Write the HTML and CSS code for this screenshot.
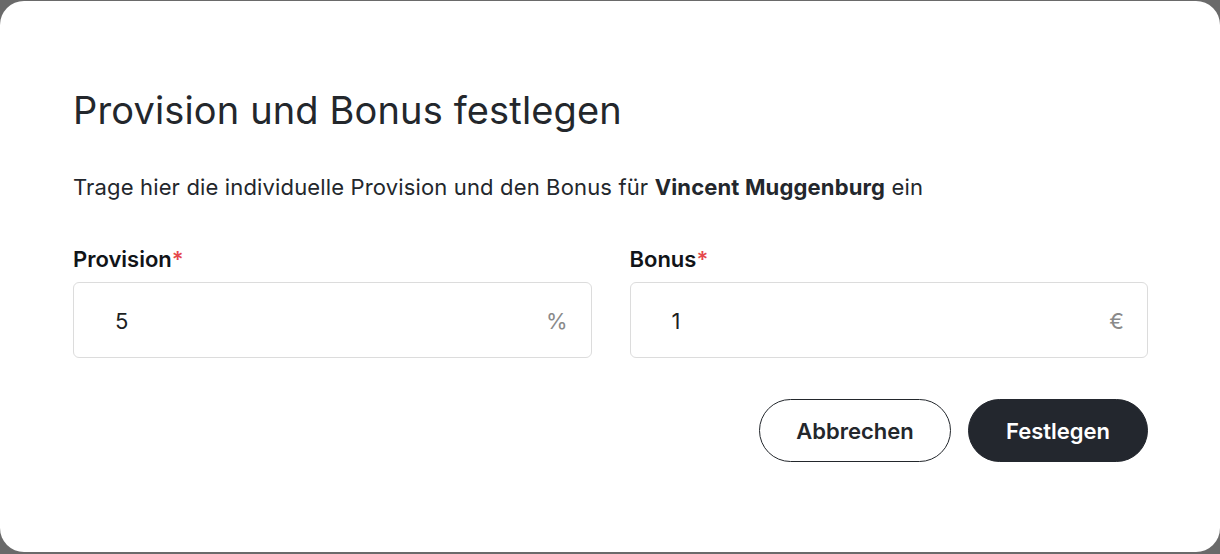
FILE: index.html
```html
<!DOCTYPE html>
<html lang="de">
<head>
<meta charset="utf-8">
<title>Provision und Bonus festlegen</title>
<link rel="stylesheet" href="styles.css">
</head>
<body>
<div class="modal">
  <h1 class="title">Provision und Bonus festlegen</h1>
  <p class="subtitle">Trage hier die individuelle Provision und den Bonus für <strong>Vincent Muggenburg</strong> ein</p>
  <div class="fields">
    <div class="field">
      <label class="label">Provision<span class="req">*</span></label>
      <div class="input">
        <span class="value">5</span>
        <span class="suffix">%</span>
      </div>
    </div>
    <div class="field">
      <label class="label">Bonus<span class="req">*</span></label>
      <div class="input">
        <span class="value">1</span>
        <span class="suffix">€</span>
      </div>
    </div>
  </div>
  <div class="actions">
    <button class="btn btn-outline">Abbrechen</button>
    <button class="btn btn-primary">Festlegen</button>
  </div>
</div>
</body>
</html>
```
FILE: styles.css
```css
html, body {
  margin: 0;
  padding: 0;
  height: 100%;
}
body {
  background: #6a6a6a;
  font-family: Inter, "Noto Sans", sans-serif;
  color: #23272c;
  overflow: hidden;
}
.modal {
  margin-top: 1px;
  height: 551px;
  box-sizing: border-box;
  background: #ffffff;
  border-radius: 24px;
  padding: 86px 72px 0 73px;
}
.title {
  margin: 0;
  font-size: 38px;
  line-height: 46px;
  font-weight: 400;
  color: #23272c;
  letter-spacing: 0.14px;
}
.subtitle {
  margin: 40px 0 0;
  font-size: 22px;
  line-height: 28px;
  font-weight: 400;
  letter-spacing: 0.15px;
}
.subtitle strong {
  font-weight: 700;
}
.fields {
  margin-top: 44px;
  display: grid;
  grid-template-columns: 1fr 1fr;
  column-gap: 38px;
}
.field {
  display: flex;
  flex-direction: column;
}
.label {
  font-size: 22px;
  line-height: 28px;
  font-weight: 600;
  color: #111418;
}
.req {
  color: #e5484d;
}
.input {
  margin-top: 9px;
  height: 76px;
  box-sizing: border-box;
  border: 1px solid #dcdcdc;
  border-radius: 6px;
  display: flex;
  align-items: center;
  justify-content: space-between;
  padding: 2px 23px 0 41px;
  font-size: 22px;
}
.value {
  color: #1c1f23;
}
.suffix {
  color: #8a8a8a;
}
.actions {
  margin-top: 41px;
  display: flex;
  justify-content: flex-end;
  gap: 17px;
}
.btn {
  height: 63px;
  border-radius: 32px;
  padding: 0;
  font-family: Inter, "Noto Sans", sans-serif;
  font-size: 22px;
  font-weight: 600;
  cursor: pointer;
}
.btn-outline {
  background: #ffffff;
  border: 1px solid #23272c;
  color: #23272c;
  width: 192px;
}
.btn-primary {
  background: #23272e;
  border: 1px solid #23272e;
  color: #ffffff;
  width: 180px;
}
```
